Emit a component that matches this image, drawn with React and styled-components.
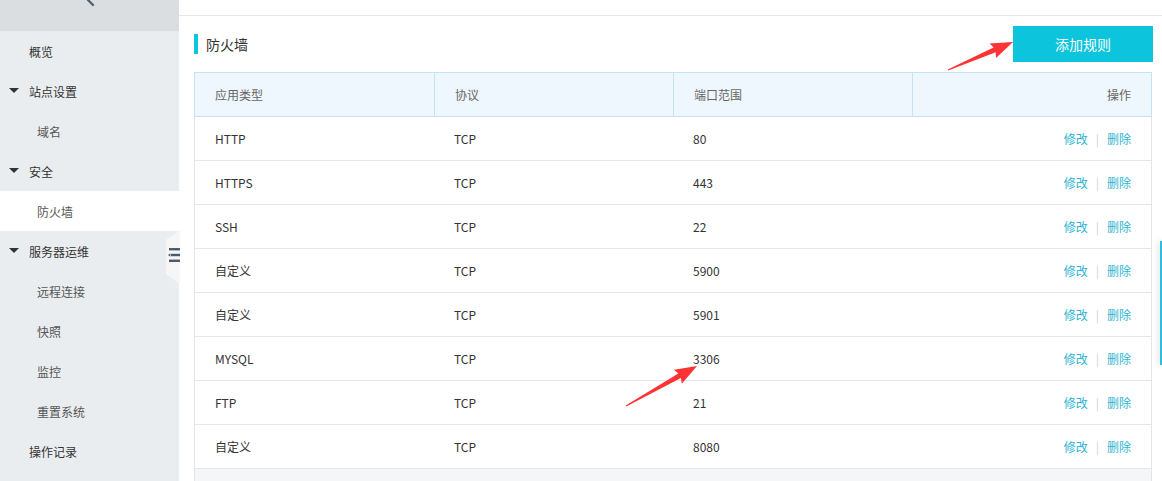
import React from "react";
import styled, { createGlobalStyle } from "styled-components";

const GlobalStyle = createGlobalStyle`
  *, *::before, *::after {
    box-sizing: border-box;
  }
  html, body {
    margin: 0;
    padding: 0;
    background: #fff;
    font-family: "Noto Sans CJK SC", "Noto Sans", sans-serif;
    overflow: hidden;
  }
`;

// DATA
const menu = [
  { label: "概览", level: 0 },
  { label: "站点设置", level: 0, caret: true },
  { label: "域名", level: 1 },
  { label: "安全", level: 0, caret: true },
  { label: "防火墙", level: 1, active: true },
  { label: "服务器运维", level: 0, caret: true },
  { label: "远程连接", level: 1 },
  { label: "快照", level: 1 },
  { label: "监控", level: 1 },
  { label: "重置系统", level: 1 },
  { label: "操作记录", level: 0 },
];

const rules = [
  ["HTTP", "TCP", "80"],
  ["HTTPS", "TCP", "443"],
  ["SSH", "TCP", "22"],
  ["自定义", "TCP", "5900"],
  ["自定义", "TCP", "5901"],
  ["MYSQL", "TCP", "3306"],
  ["FTP", "TCP", "21"],
  ["自定义", "TCP", "8080"],
];

// red annotation arrow from tail to tip
const arrowPoints = (x1, y1, x2, y2) => {
  const dx = x2 - x1;
  const dy = y2 - y1;
  const len = Math.sqrt(dx * dx + dy * dy);
  const ux = dx / len;
  const uy = dy / len;
  const nx = -uy;
  const ny = ux;
  const h = 20;
  const w = 8;
  const bx = x2 - ux * h;
  const by = y2 - uy * h;
  const p = (x, y) => `${x.toFixed(1)},${y.toFixed(1)}`;
  return [
    p(x1 + nx * 0.6, y1 + ny * 0.6),
    p(bx + nx * 2.6, by + ny * 2.6),
    p(bx + nx * w - ux * 2, by + ny * w - uy * 2),
    p(x2, y2),
    p(bx - nx * w - ux * 2, by - ny * w - uy * 2),
    p(bx - nx * 2.6, by - ny * 2.6),
    p(x1 - nx * 0.6, y1 - ny * 0.6),
  ].join(" ");
};

const App = () => {
  return (
    <>
      <GlobalStyle />
      <Page>
        <Sidebar>
          <SideTop>
            <svg width="12" height="8" viewBox="0 0 12 8">
              <line x1="2" y1="0" x2="7" y2="5" stroke="#4f6478" strokeWidth="2.4" strokeLinecap="round" />
            </svg>
          </SideTop>
          {menu.map((item) => (
            <MenuItem key={item.label} level={item.level} active={item.active}>
              {item.caret && <Caret />}
              {item.label}
            </MenuItem>
          ))}
          <ToggleTab>
            <svg width="12" height="16" viewBox="0 0 12 16">
              <rect x="1" y="1" width="11" height="2.4" fill="#4b5b6b" />
              <rect x="3" y="6.8" width="9" height="2.4" fill="#4b5b6b" />
              <rect x="1" y="12.6" width="11" height="2.4" fill="#4b5b6b" />
              <path d="M0 8 L2.4 6.2 L2.4 9.8 Z" fill="#4b5b6b" />
            </svg>
          </ToggleTab>
        </Sidebar>
        <Main>
          <TopBar />
          <Content>
            <TitleRow>
              <Title>防火墙</Title>
              <AddButton>添加规则</AddButton>
            </TitleRow>
            <Table>
              <HeadRow>
                <HeadCell>应用类型</HeadCell>
                <HeadCell>协议</HeadCell>
                <HeadCell>端口范围</HeadCell>
                <HeadCell right>操作</HeadCell>
              </HeadRow>
              {rules.map((r, i) => (
                <Row key={i}>
                  <Cell>{r[0]}</Cell>
                  <Cell>{r[1]}</Cell>
                  <Cell>{r[2]}</Cell>
                  <Cell right>
                    <Action>修改</Action>
                    <Sep>|</Sep>
                    <Action>删除</Action>
                  </Cell>
                </Row>
              ))}
              <TableFooter />
            </Table>
          </Content>
        </Main>
        <EdgePanel />
        <Annotations width="1162" height="481" viewBox="0 0 1162 481">
          <polygon points={arrowPoints(948, 70, 1013, 42)} fill="#ff3333" />
          <polygon points={arrowPoints(626, 406, 697, 366)} fill="#ff3333" />
        </Annotations>
      </Page>
    </>
  );
};

const Page = styled.div`
  position: relative;
  display: flex;
  min-height: 100vh;
  width: 1162px;
`;

const Sidebar = styled.nav`
  position: relative;
  width: 179px;
  flex-shrink: 0;
  background: #eaedf0;
  display: flex;
  flex-direction: column;
`;

const SideTop = styled.div`
  height: 31px;
  background: #dadee1;
  padding-left: 86px;
  svg {
    display: block;
  }
`;

const MenuItem = styled.div`
  position: relative;
  height: 40px;
  display: flex;
  align-items: center;
  padding-left: ${(p) => (p.level ? 37 : 29)}px;
  font-size: 12px;
  color: ${(p) => (p.level ? "#555" : "#333")};
  background: ${(p) => (p.active ? "#fff" : "transparent")};
`;

const Caret = styled.span`
  position: absolute;
  left: 9px;
  top: 17px;
  width: 0;
  height: 0;
  border-left: 5px solid transparent;
  border-right: 5px solid transparent;
  border-top: 5px solid #333;
`;

const ToggleTab = styled.div`
  position: absolute;
  top: 230px;
  right: -1px;
  width: 14px;
  height: 54px;
  background: #f6f6f6;
  clip-path: polygon(0 10px, 100% 0, 100% 100%, 0 calc(100% - 10px));
  display: flex;
  align-items: center;
  justify-content: flex-end;
  svg {
    display: block;
    margin-top: -4px;
  }
`;

const Main = styled.main`
  flex: 1;
  background: #fff;
  display: flex;
  flex-direction: column;
`;

const TopBar = styled.div`
  height: 16px;
  border-bottom: 1px solid #e6e7e9;
`;

const Content = styled.div`
  padding: 0 10px 0 15px;
`;

const TitleRow = styled.div`
  display: flex;
  align-items: center;
  justify-content: space-between;
  margin: 10px 0;
  height: 36px;
`;

const Title = styled.h2`
  margin: 0;
  font-size: 14px;
  font-weight: normal;
  color: #333;
  display: flex;
  align-items: center;
  &::before {
    content: "";
    width: 4px;
    height: 20px;
    background: #0ec3dc;
    margin-right: 8px;
  }
`;

const AddButton = styled.button`
  width: 140px;
  height: 36px;
  border: none;
  background: #0cc4dc;
  color: #fff;
  font-family: inherit;
  font-size: 14px;
  margin-right: -1px;
`;

const Table = styled.div`
  border: 1px solid #e2e5e9;
  border-top: none;
`;

const HeadRow = styled.div`
  display: grid;
  grid-template-columns: repeat(4, 1fr);
  height: 45px;
  background: #eff7fe;
  border: 1px solid #c6e2fa;
  margin: 0 -1px;
`;

const HeadCell = styled.div`
  display: flex;
  align-items: center;
  justify-content: ${(p) => (p.right ? "flex-end" : "flex-start")};
  padding: 0 20px;
  font-size: 12px;
  color: #666;
  & + & {
    border-left: 1px solid #c6e2fa;
  }
`;

const Row = styled.div`
  display: grid;
  grid-template-columns: repeat(4, 1fr);
  height: 44px;
  border-bottom: 1px solid #e3e6ea;
`;

const Cell = styled.div`
  display: flex;
  align-items: center;
  justify-content: ${(p) => (p.right ? "flex-end" : "flex-start")};
  padding: 0 20px;
  font-size: 12px;
  color: #333;
`;

const Action = styled.a`
  color: #2fb5d4;
  cursor: pointer;
`;

const Sep = styled.span`
  color: #ccd3dc;
  margin: 0 8px;
`;

const TableFooter = styled.div`
  height: 48px;
  background: #f4f6f8;
`;

const EdgePanel = styled.div`
  position: absolute;
  top: 241px;
  left: 1160px;
  width: 10px;
  height: 124px;
  background: #fff;
  border-left: 2px solid #2bbfdb;
  box-shadow: -3px 0 6px rgba(0, 0, 0, 0.08);
`;

const Annotations = styled.svg`
  position: absolute;
  top: 0;
  left: 0;
  pointer-events: none;
`;

export default App;
